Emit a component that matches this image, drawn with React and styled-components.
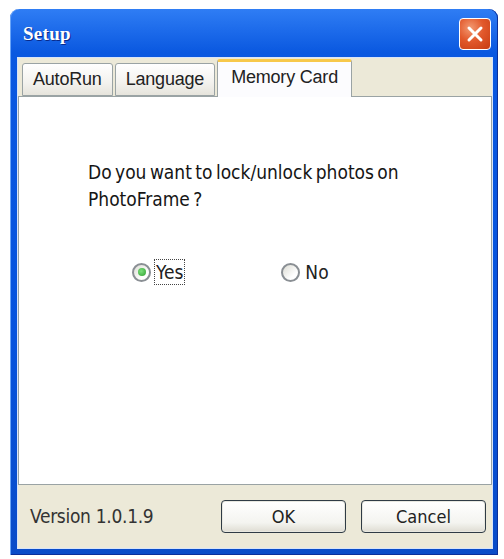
import React, { useState } from "react"
import styled, { createGlobalStyle } from "styled-components"

const Global = createGlobalStyle`
    body {
        margin: 0;
        background: #fff;
        font-family: "Liberation Sans", Arial, sans-serif;
    }
`

const Window = styled.div`
    width: 488px;
    height: 546px;
    margin: 9px 0 0 10px;
    display: flex;
    flex-direction: column;
    border-radius: 9px 9px 0 0;
    background: linear-gradient(180deg, #2f7df4 0%, #0a58e0 8%, #0553dd 60%, #0a4cc8 100%);
    padding: 0 5px 6px 7px;
    box-sizing: border-box;
    box-shadow: inset 1px 0 0 #6aa5f8, inset -1px 0 0 #0a2f9a, inset 0 -1px 0 #0a2f9a;
`

const TitleBar = styled.div`
    height: 48px;
    display: flex;
    align-items: center;
    justify-content: space-between;
    padding: 2px 2px 0 6px;
    box-sizing: border-box;
`

const Title = styled.span`
    color: #fff;
    font-family: "Liberation Serif", "DejaVu Serif", serif;
    font-weight: bold;
    font-size: 19px;
    text-shadow: 1px 1px 0 #0a2a8a;
    letter-spacing: 0.3px;
`

const CloseButton = styled.div`
    width: 32px;
    height: 32px;
    border: 1px solid #fff;
    border-radius: 4px;
    box-sizing: border-box;
    background: radial-gradient(circle at 35% 30%, #f39a72 0%, #e2592c 45%, #c73c12 100%);
    display: flex;
    align-items: center;
    justify-content: center;
`

const Body = styled.div`
    flex: 1;
    display: flex;
    flex-direction: column;
    background: #ece9d8;
    box-shadow: inset 0 0 0 1px #d8e4f8;
    padding: 2px 1px 0 1px;
`

const TabStrip = styled.div`
    display: flex;
    align-items: flex-end;
    height: 37px;
    padding-left: 4px;
    position: relative;
    z-index: 1;
`

const Tab = styled.div`
    height: ${p => (p.active ? "38px" : "33px")};
    margin-bottom: ${p => (p.active ? "-1px" : "0")};
    padding: 0 ${p => (p.active ? "13px" : "10px")};
    margin-right: 2px;
    display: flex;
    align-items: ${p => (p.active ? "flex-start" : "center")};
    padding-top: ${p => (p.active ? "5px" : "0")};
    box-sizing: border-box;
    font-size: 18px;
    color: #222;
    border: 1px solid #9aa3a4;
    border-bottom: ${p => (p.active ? "none" : "1px solid #9aa3a4")};
    border-top: ${p => (p.active ? "3px solid #f7c84a" : "1px solid #9aa3a4")};
    border-radius: 3px 3px 0 0;
    background: ${p => (p.active ? "#fcfcfe" : "linear-gradient(180deg, #fff 0%, #f3f2ee 60%, #e6e4dc 100%)")};
    letter-spacing: -0.2px;
`

const Panel = styled.div`
    height: 389px;
    background: #fff;
    border: 1px solid #9aa3a4;
    box-sizing: border-box;
    display: flex;
    flex-direction: column;
    padding: 62px 0 0 69px;
`

const Question = styled.p`
    margin: 0;
    width: 340px;
    font-family: "DejaVu Sans Condensed", "Liberation Sans Narrow", sans-serif;
    font-size: 19px;
    line-height: 27px;
    color: #151515;
    word-spacing: -2px;
`

const RadioRow = styled.div`
    display: flex;
    gap: 96px;
    margin: 46px 0 0 44px;
`

const RadioLabel = styled.label`
    display: flex;
    align-items: center;
    gap: 3px;
    font-family: "DejaVu Sans Condensed", sans-serif;
    font-size: 19px;
    color: #222;
    cursor: pointer;
`

const RadioCircle = styled.span`
    width: 19px;
    height: 19px;
    border-radius: 50%;
    border: 2px solid #8a8f94;
    box-sizing: border-box;
    background: linear-gradient(135deg, #dcdcd4 0%, #fff 70%);
    display: flex;
    align-items: center;
    justify-content: center;
`

const Dot = styled.span`
    width: 8px;
    height: 8px;
    border-radius: 50%;
    background: radial-gradient(circle at 40% 40%, #7de07d 0%, #2ea02e 100%);
`

const LabelText = styled.span`
    padding: 1px 1px;
    border: 1px dotted ${p => (p.focused ? "#444" : "transparent")};
`

const Footer = styled.div`
    flex: 1;
    display: flex;
    align-items: center;
    padding: 0 6px 2px 12px;
`

const Version = styled.span`
    font-family: "DejaVu Sans Condensed", sans-serif;
    font-size: 19px;
    color: #333;
    letter-spacing: -0.3px;
    flex: 1;
`

const Button = styled.button`
    width: 125px;
    height: 33px;
    margin-left: 15px;
    border: 1px solid #2f3b45;
    border-radius: 4px;
    background: linear-gradient(180deg, #fff 0%, #f4f4f0 70%, #dedcd2 100%);
    box-shadow: inset 0 0 0 1px #e8e8e0;
    font-family: "DejaVu Sans Condensed", sans-serif;
    font-size: 18px;
    color: #222;
    padding: 0;
`

const Radio = ({ checked, focused, label, onClick }) => (
    <RadioLabel onClick={onClick}>
        <RadioCircle>{checked && <Dot />}</RadioCircle>
        <LabelText focused={focused}>{label}</LabelText>
    </RadioLabel>
)

export default function App() {
    const [lock, setLock] = useState(true)
    return (
        <>
            <Global />
            <Window>
                <TitleBar>
                    <Title>Setup</Title>
                    <CloseButton>
                        <svg width="18" height="18" viewBox="0 0 18 18">
                            <path d="M3 3 L15 15 M15 3 L3 15" stroke="#fff" strokeWidth="3" strokeLinecap="round" />
                        </svg>
                    </CloseButton>
                </TitleBar>
                <Body>
                    <TabStrip>
                        <Tab>AutoRun</Tab>
                        <Tab>Language</Tab>
                        <Tab active>Memory Card</Tab>
                    </TabStrip>
                    <Panel>
                        <Question>Do you want to lock/unlock photos on PhotoFrame ?</Question>
                        <RadioRow>
                            <Radio label="Yes" checked={lock} focused={lock} onClick={() => setLock(true)} />
                            <Radio label="No" checked={!lock} focused={!lock} onClick={() => setLock(false)} />
                        </RadioRow>
                    </Panel>
                    <Footer>
                        <Version>Version 1.0.1.9</Version>
                        <Button>OK</Button>
                        <Button>Cancel</Button>
                    </Footer>
                </Body>
            </Window>
        </>
    )
}
